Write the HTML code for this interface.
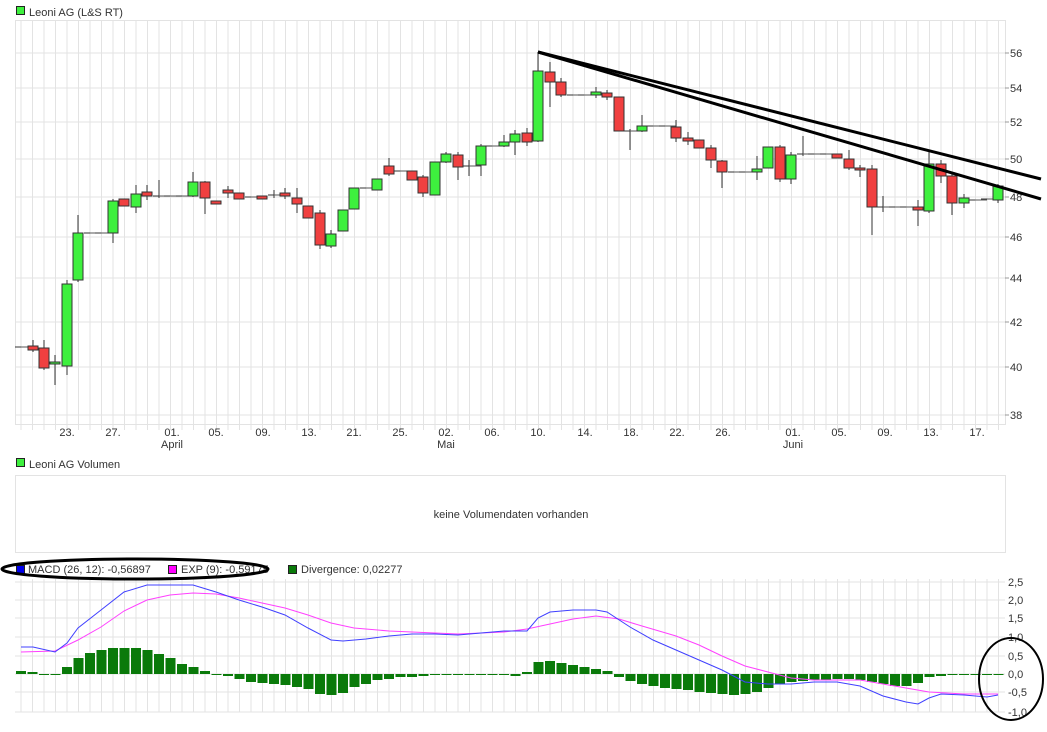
<!DOCTYPE html>
<html><head><meta charset="utf-8"><style>
body{margin:0;background:#fff;width:1047px;height:727px;overflow:hidden;font-family:"Liberation Sans",sans-serif}
svg text{font-family:"Liberation Sans",sans-serif;font-size:11px;fill:#333}
</style></head><body>
<svg id="s" width="1047" height="727" xmlns="http://www.w3.org/2000/svg"></svg>
<script>
var s=document.getElementById('s'),h='';
function L(x1,y1,x2,y2,c,w){h+='<line x1="'+x1+'" y1="'+y1+'" x2="'+x2+'" y2="'+y2+'" stroke="'+c+'" stroke-width="'+(w||1)+'"/>';}
function R(x,y,w,hh,f,st){h+='<rect x="'+x+'" y="'+y+'" width="'+w+'" height="'+hh+'" fill="'+f+'" stroke="'+(st||'none')+'"/>';}
function T(x,y,t,a){h+='<text x="'+x+'" y="'+y+'"'+(a?' text-anchor="'+a+'"':'')+'>'+t+'</text>';}
var G='#e3e3e3';
// main panel
T(29,16,'Leoni AG (L&amp;S RT)');R(16.5,6.5,8,8,'#3ef03e','#222');
R(15.5,20.5,990,404,'#fff',G);
var xs=[];for(var i=0;i<86;i++){xs.push(21+i*11.5);}
xs.forEach(function(x){if(x<1005){L(x,21,x,430,G);L(x,476,x,552,'#fff');L(x,579,x,712,G);}});
var yl=[[56,53],[54,88],[52,122],[50,159],[48,197],[46,237],[44,278],[42,322],[40,367],[38,415]];
yl.forEach(function(a){L(15,a[1],1005,a[1],G);L(1005,a[1],1009,a[1],'#999');T(1010,a[1]+4,a[0]);});
var d=[['23.',67],['27.',113],['01.',172],['05.',216],['09.',263],['13.',309],['21.',354],['25.',400],['02.',446],['06.',492],['10.',538],['14.',585],['18.',631],['22.',677],['26.',723],['01.',793],['05.',839],['09.',885],['13.',931],['17.',977]];
d.forEach(function(a){T(a[1],436,a[0],'middle');});
T(172,448,'April','middle');T(446,448,'Mai','middle');T(793,448,'Juni','middle');
// candles: x, top, bottom, color(g/r/d), wickTop, wickBot
var C=[[21,347,347,'d'],[33,346,350,'r',340,352],[44,348,368,'r',340,370],[55,362,364,'g',355,385],[67,284,366,'g',280,375],[78,233,280,'g',215,282],[90,233,233,'d'],[101,233,233,'d'],[113,201,233,'g',199,243],[124,199,206,'r'],[136,194,207,'g',185,213],[147,192,196,'r',185,200],[159,196,196,'d',180,198],[170,196,196,'d'],[182,196,196,'d'],[193,182,196,'g',172,197],[205,182,198,'r',181,214],[216,201,204,'r'],[228,190,193,'r',186,198],[239,193,199,'r'],[251,197,197,'d'],[262,196,199,'r'],[274,195,195,'d',190,198],[285,193,196,'r',188,199],[297,198,204,'r',188,213],[308,206,218,'r'],[320,213,245,'r',210,249],[331,234,246,'g',230,248],[343,210,231,'g'],[354,188,209,'g'],[366,188,188,'d'],[377,179,190,'g'],[389,166,174,'r',158,176],[400,171,171,'d'],[412,171,180,'r'],[423,177,193,'r',175,197],[435,162,195,'g'],[446,154,162,'g',152,163],[458,155,167,'r',152,180],[469,166,166,'d',160,176],[481,146,165,'g',144,176],[492,146,146,'d'],[504,142,146,'g',135,147],[515,134,142,'g',130,155],[527,133,142,'r',128,146],[538,71,141,'g',52,142],[550,72,82,'r',62,107],[561,82,95,'r',78,97],[573,95,95,'d'],[584,95,95,'d'],[596,92,95,'g',87,98],[607,93,97,'r',90,100],[619,97,131,'r'],[630,131,131,'d',129,150],[642,126,131,'g',115,132],[653,126,126,'d'],[665,126,126,'d'],[676,127,138,'r',120,142],[688,138,141,'r',132,145],[699,140,148,'r'],[711,148,160,'r',145,168],[722,161,172,'r',160,188],[734,172,172,'d'],[745,172,172,'d'],[757,169,172,'g',156,180],[768,147,168,'g'],[780,147,179,'r',145,182],[791,155,179,'g',152,184],[803,154,154,'d',136,156],[814,154,154,'d'],[826,154,154,'d'],[837,154,158,'r'],[849,159,168,'r',150,170],[860,168,170,'r',165,177],[872,169,207,'r',165,235],[883,207,207,'d',196,212],[895,207,207,'d'],[906,207,207,'d'],[918,207,210,'r',200,226],[929,164,211,'g',150,213],[941,164,176,'r',160,183],[952,176,203,'r',174,215],[964,198,203,'g',194,208],[975,200,200,'d'],[987,199,199,'d'],[998,186,200,'g',184,203]];
C.forEach(function(c,i){var x=c[0];if(c[4])L(x,c[4],x,c[5],'#333');
 if(c[3]=='d'){L(x-6,c[1],x+6,c[1],'#333');if(C[i+1])L(x,c[1],C[i+1][0],c[1],'#555');}
 else R(x-5,c[1],10,Math.max(c[2]-c[1],2),c[3]=='g'?'#3ef03e':'#f04040','#333');});
L(538,52,1041,179,'#000',3);L(538,52,1041,199,'#000',3);
// volume
T(29,468,'Leoni AG Volumen');R(16.5,458.5,8,8,'#3ef03e','#222');
R(15.5,475.5,990,77,'#fff',G);T(511,518,'keine Volumendaten vorhanden','middle');
// MACD
var ml=[[2.5,582],[2.0,600],[1.5,618],[1.0,637],[0.5,656],[0.0,674],[-0.5,692],[-1.0,712]];
ml.forEach(function(a){L(15,a[1],1005,a[1],G);T(1008,a[1]+4,a[0].toFixed(1).replace('.',','));});
L(15,712,1005,712,G);
var bv=[3,2,0,-1,7,16,21,24,26,26,26,24,20,16,10,7,3,-1,-2,-5,-8,-9,-10,-11,-13,-15,-20,-21,-19,-13,-10,-6,-5,-3,-3,-2,-1,-1,-1,-1,-1,-1,-1,-2,2,12,13,11,9,7,5,3,-3,-7,-10,-12,-14,-15,-16,-18,-19,-20,-21,-20,-18,-14,-10,-8,-7,-6,-6,-5,-5,-6,-8,-10,-12,-12,-9,-3,-2,-1,-1,-1,-1,-1];
bv.forEach(function(v,i){var x=21+i*11.5;R(x-5,v>0?674-v:674,10,Math.max(Math.abs(v),1),'#0a7a0a');});
var bl=[[21,647],[33,647],[55,652],[67,643],[78,628],[101,610],[124,592],[147,585],[170,585],[193,585],[216,592],[239,600],[262,607],[285,615],[308,628],[331,640],[343,641],[366,639],[389,636],[412,634],[435,634],[458,635],[481,633],[504,631],[527,631],[538,618],[550,612],[573,610],[596,610],[607,612],[630,627],[653,640],[676,650],[699,660],[722,670],[745,682],[768,684],[791,684],[814,682],[837,682],[860,686],[883,696],[906,702],[918,704],[929,698],[941,694],[964,695],[987,697],[998,695]];
var pl=[[21,652],[55,651],[78,640],[101,627],[124,611],[147,600],[170,595],[193,593],[216,594],[239,598],[262,603],[285,608],[308,615],[331,623],[354,628],[389,631],[412,632],[458,634],[504,632],[527,629],[550,624],[573,619],[596,616],[619,619],[642,626],[676,636],[699,645],[722,656],[745,666],[768,672],[791,678],[814,680],[860,680],[883,684],[906,688],[929,692],[964,694],[998,694]];
h+='<polyline fill="none" stroke="#ff40ff" stroke-width="1" points="'+pl.join(' ')+'"/>';
h+='<polyline fill="none" stroke="#4040ff" stroke-width="1" points="'+bl.join(' ')+'"/>';
R(16.5,565.5,8,8,'#0000ee','#222');T(28,573,'MACD (26, 12): -0,56897');
R(168.5,565.5,8,8,'#ff00ff','#222');T(181,573,'EXP (9): -0,59175');
R(288.5,565.5,8,8,'#0a7a0a','#222');T(301,573,'Divergence: 0,02277');
h+='<ellipse cx="135" cy="569" rx="133" ry="10" fill="none" stroke="#000" stroke-width="3"/>';
h+='<ellipse cx="1011" cy="679" rx="32" ry="41" fill="none" stroke="#000" stroke-width="2"/>';
s.innerHTML=h;
</script>
</body></html>
